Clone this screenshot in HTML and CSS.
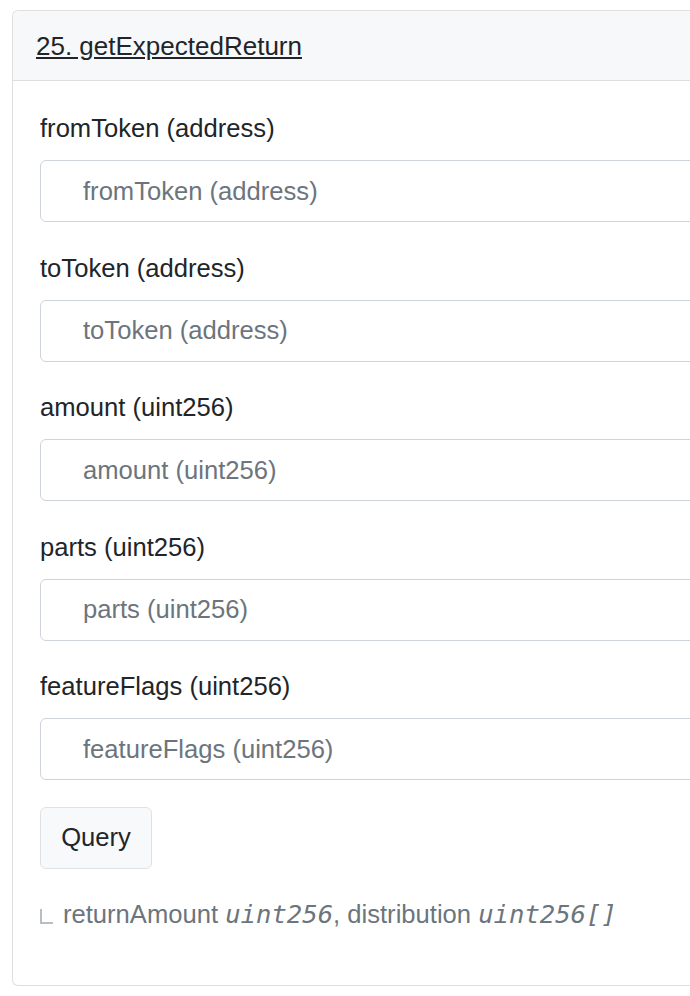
FILE: index.html
```html
<!DOCTYPE html>
<html>
<head>
<meta charset="utf-8">
<link rel="stylesheet" href="styles.css">
</head>
<body>
<div class="card">
  <div class="card-header"><a class="fn-link" href="#">25. getExpectedReturn</a></div>
  <div class="card-body">
    <div class="form-group">
      <label class="field-label">fromToken (address)</label>
      <input class="form-control" type="text" placeholder="fromToken (address)">
    </div>
    <div class="form-group">
      <label class="field-label">toToken (address)</label>
      <input class="form-control" type="text" placeholder="toToken (address)">
    </div>
    <div class="form-group">
      <label class="field-label">amount (uint256)</label>
      <input class="form-control" type="text" placeholder="amount (uint256)">
    </div>
    <div class="form-group">
      <label class="field-label">parts (uint256)</label>
      <input class="form-control" type="text" placeholder="parts (uint256)">
    </div>
    <div class="form-group">
      <label class="field-label">featureFlags (uint256)</label>
      <input class="form-control" type="text" placeholder="featureFlags (uint256)">
    </div>
    <button class="btn-query" type="button">Query</button>
    <div class="output"><span class="corner"></span>returnAmount <i class="type">uint256</i>, distribution <i class="type">uint256[]</i></div>
  </div>
</div>
</body>
</html>
```

FILE: styles.css
```css
html, body {
  margin: 0;
  padding: 0;
  overflow: hidden;
  background: #fff;
}
body {
  font-family: "Liberation Sans", Arial, Helvetica, sans-serif;
  font-size: 25.6px;
  color: #212529;
  padding: 10px 0 0 12px;
  height: 996px;
  box-sizing: border-box;
}
.card {
  width: 679px;
  height: 976px;
  box-sizing: border-box;
  border: 1px solid #dfdfdf;
  border-right: none;
  border-radius: 6px 0 0 6px;
  background: #fff;
  overflow: hidden;
}
.card-header {
  height: 70px;
  box-sizing: border-box;
  background: #f7f8fa;
  border-bottom: 1px solid #dfdfdf;
  padding: 0 0 0 23px;
  display: flex;
  align-items: center;
  line-height: 38px;
  font-size: 26px;
}
.fn-link {
  color: #212529;
  text-decoration: underline;
  text-underline-offset: 2px;
}
.card-body {
  padding: 28px 0 0 27px;
}
.form-group {
  margin-bottom: 26.5px;
}
.field-label {
  display: block;
  line-height: 38px;
  margin-bottom: 13px;
}
.form-control {
  display: block;
  width: 720px;
  height: 62px;
  box-sizing: border-box;
  border: 1.5px solid #ced4da;
  border-radius: 6px;
  padding: 0 0 0 42px;
  font-family: inherit;
  font-size: 25.6px;
  color: #495057;
  background: #fff;
}
.form-control::placeholder {
  color: #6c757d;
  opacity: 1;
}
.btn-query {
  display: block;
  width: 112px;
  height: 62px;
  box-sizing: border-box;
  background: #f8f9fa;
  border: 1.5px solid #dee2e6;
  border-radius: 6px;
  font-family: inherit;
  font-size: 25.6px;
  color: #212529;
  padding: 0;
  margin-top: 0;
}
.output {
  margin-top: 26px;
  line-height: 38px;
  color: #6c757d;
  white-space: nowrap;
}
.corner {
  display: inline-block;
  width: 11px;
  height: 13px;
  border-left: 2px solid #b9bec4;
  border-bottom: 2px solid #b9bec4;
  margin: 0 10px 0 0;
  vertical-align: -1px;
}
.type {
  font-family: "DejaVu Sans Mono", "Liberation Mono", monospace;
  font-style: italic;
  font-size: 25.6px;
}
```
